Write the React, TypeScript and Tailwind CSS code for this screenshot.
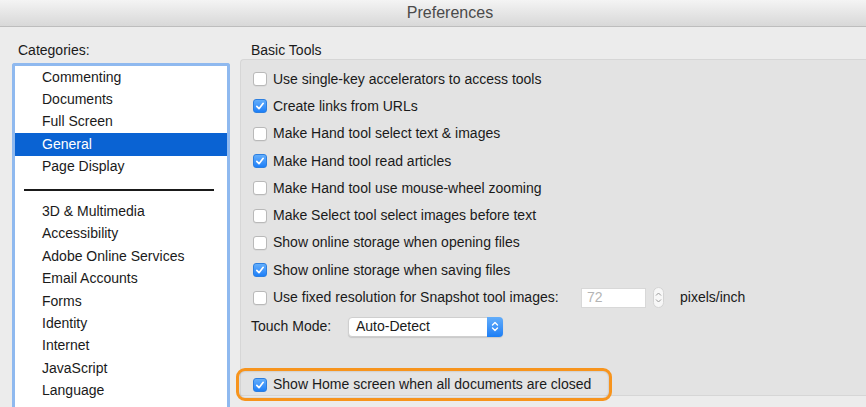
import React from "react";

const Check = ({ checked }: { checked: boolean }) =>
  checked ? (
    <div className="w-[14px] h-[14px] rounded-[3px] bg-gradient-to-b from-[#63aefb] to-[#1b7ff8] border border-[#2d7fe0] flex items-center justify-center shrink-0">
      <svg width="12" height="12" viewBox="0 0 12 12">
        <path d="M2.8 6.4 L5 8.7 L9.2 3.3" fill="none" stroke="white" strokeWidth="1.7" strokeLinecap="round" strokeLinejoin="round" />
      </svg>
    </div>
  ) : (
    <div className="w-[14px] h-[14px] rounded-[3px] bg-white border border-[#b9b9b9] shadow-[0_0.5px_0.5px_rgba(0,0,0,0.08)] shrink-0" />
  );

const rows: { label: string; checked: boolean }[] = [
  { label: "Use single-key accelerators to access tools", checked: false },
  { label: "Create links from URLs", checked: true },
  { label: "Make Hand tool select text & images", checked: false },
  { label: "Make Hand tool read articles", checked: true },
  { label: "Make Hand tool use mouse-wheel zooming", checked: false },
  { label: "Make Select tool select images before text", checked: false },
  { label: "Show online storage when opening files", checked: false },
  { label: "Show online storage when saving files", checked: true },
];

const top = ["Commenting", "Documents", "Full Screen", "General", "Page Display"];
const bottom = [
  "3D & Multimedia",
  "Accessibility",
  "Adobe Online Services",
  "Email Accounts",
  "Forms",
  "Identity",
  "Internet",
  "JavaScript",
  "Language",
  "Measuring (2D)",
];

export default function App() {
  return (
    <div className="w-[866px] h-[407px] overflow-hidden bg-[#ececec] font-['Liberation_Sans',Arial,sans-serif] text-[14px] text-[#1a1a1a] flex flex-col">
      <div className="h-[27px] shrink-0 border-b border-[#bdbdbd] bg-gradient-to-b from-[#f4f4f4] to-[#d8d8d8] flex items-center justify-center pl-[34px] text-[16px] text-[#4a4a4a]">
        Preferences
      </div>
      <div className="flex flex-1 min-h-0">
        <div className="w-[240px] shrink-0 pl-[12px] flex flex-col">
          <div className="h-[36px] shrink-0 pl-[6px] pt-[15px] text-[14px] leading-[16px]">Categories:</div>
          <div className="w-[218px] flex-1 border-[3px] border-b-0 border-[#8fb9ef] rounded-t-[3px] bg-white overflow-hidden">
            {top.map((t) => (
              <div
                key={t}
                className={
                  t === "General"
                    ? "h-[22.4px] flex items-center pl-[27px] bg-[#0a63d3] text-white"
                    : "h-[22.4px] flex items-center pl-[27px]"
                }
              >
                {t}
              </div>
            ))}
            <div className="h-[22.4px] flex items-center pt-[2px]">
              <div className="ml-[9px] w-[190px] h-[1.5px] bg-[#1a1a1a]" />
            </div>
            {bottom.map((t) => (
              <div key={t} className="h-[22.4px] flex items-center pl-[27px]">
                {t}
              </div>
            ))}
          </div>
        </div>
        <div className="flex-1 flex flex-col min-w-0">
          <div className="h-[32px] shrink-0 pl-[11px] pt-[15px] text-[14px] leading-[16px]">Basic Tools</div>
          <div className="h-[337px] shrink-0 bg-[#e3e3e3] border-t border-l border-b border-[#d6d6d6] rounded-tl-[4px] pl-[12px] pt-[5.5px] flex flex-col">
            {rows.map((r) => (
              <div key={r.label} className="h-[27.3px] shrink-0 flex items-center gap-[6px]">
                <Check checked={r.checked} />
                <span>{r.label}</span>
              </div>
            ))}
            <div className="h-[27.3px] shrink-0 flex items-center">
              <Check checked={false} />
              <span className="ml-[6px] w-[308px]">Use fixed resolution for Snapshot tool images:</span>
              <div className="w-[65px] h-[20px] bg-white border border-[#d8d8d8] flex items-center pl-[5px] text-[#b4b4b4]">72</div>
              <div className="ml-[7px] w-[11px] h-[21px] rounded-full bg-[#f7f7f7] border border-[#d4d4d4] flex items-center justify-center">
                <svg width="7" height="13" viewBox="0 0 7 13">
                  <path d="M1 4.5 L3.5 2 L6 4.5 M1 8.5 L3.5 11 L6 8.5" fill="none" stroke="#9a9a9a" strokeWidth="1" />
                </svg>
              </div>
              <span className="ml-[16px]">pixels/inch</span>
            </div>
            <div className="h-[31px] shrink-0 flex items-center -ml-[2px]">
              <span className="w-[97px]">Touch Mode:</span>
              <div className="w-[155px] h-[20px] bg-white rounded-[4px] border border-[#cfcfcf] shadow-[0_1px_1px_rgba(0,0,0,0.12)] flex items-center">
                <span className="flex-1 pl-[7px]">Auto-Detect</span>
                <div className="w-[16px] h-[20px] -mr-[1px] rounded-r-[4px] bg-gradient-to-b from-[#62adfa] to-[#1a7ef5] flex items-center justify-center">
                  <svg width="8" height="13" viewBox="0 0 8 13">
                    <path d="M1.5 5 L4 2.5 L6.5 5 M1.5 8 L4 10.5 L6.5 8" fill="none" stroke="white" strokeWidth="1.4" strokeLinecap="round" strokeLinejoin="round" />
                  </svg>
                </div>
              </div>
            </div>
            <div className="h-[29px] shrink-0" />
            <div className="relative h-[27px] shrink-0 flex items-center gap-[6px]">
              <div className="absolute -left-[17px] -top-[3.5px] w-[376px] h-[33px] border-[3px] border-[#f7941d] rounded-[9px] shadow-[inset_0_0_2px_rgba(0,0,0,0.25)]" />
              <Check checked={true} />
              <span>Show Home screen when all documents are closed</span>
            </div>
          </div>
        </div>
      </div>
    </div>
  );
}
